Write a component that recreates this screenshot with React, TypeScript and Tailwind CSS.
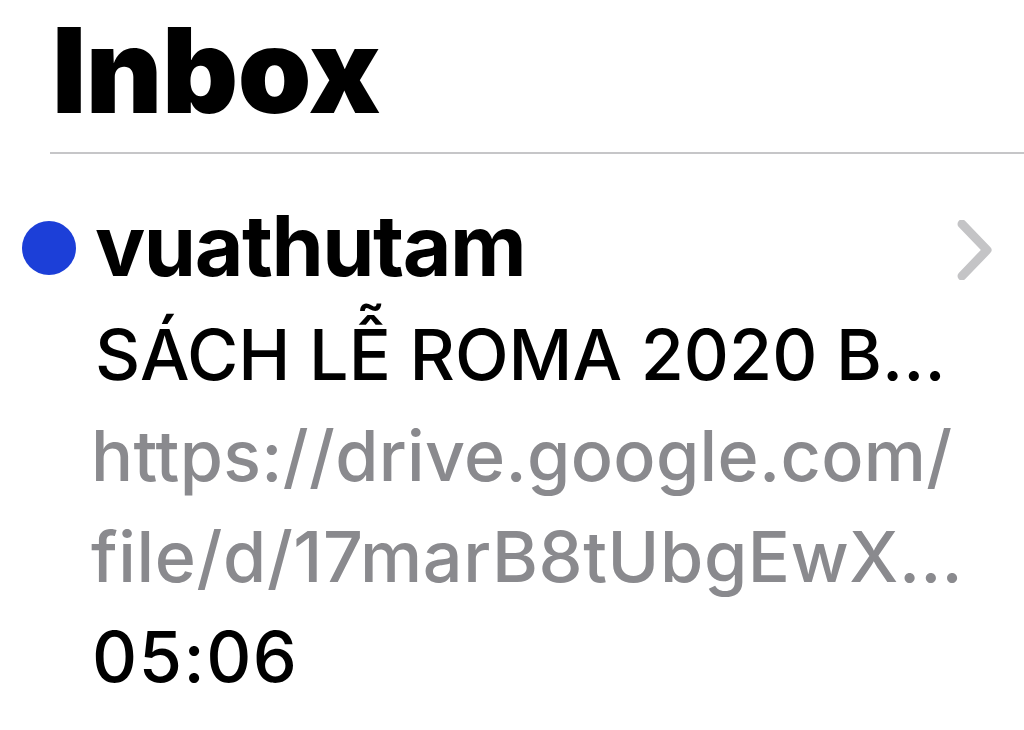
import React from "react";

export default function App() {
  const font = { fontFamily: "Inter, 'Noto Sans', 'Liberation Sans', sans-serif" };
  return (
    <div className="w-[1024px] h-[730px] bg-white overflow-hidden text-black" style={font}>
      <div className="pl-[52px] pt-[11px]">
        <h1 className="text-[118px] leading-none font-black tracking-[-0.5px]">Inbox</h1>
      </div>
      <div className="ml-[50px] mt-[23px] h-[2px] bg-[#c6c6c8]" />
      <div className="flex">
        <div className="w-[95px] shrink-0 flex justify-center pl-[3px] pt-[67px]">
          <div className="w-[54px] h-[54px] rounded-full bg-[#1c3fd8]" />
        </div>
        <div className="flex-1 min-w-0 flex flex-col pt-[42px]">
          <div className="text-[84px] leading-[100px] font-bold tracking-[-1.5px]">vuathutam</div>
          <div className="mt-[8px] text-[70px] leading-[101px] font-medium whitespace-nowrap">
            SÁCH LỄ ROMA 2020 B…
          </div>
          <div className="-ml-[4px] text-[70px] leading-[101px] text-[#8a8a8e] font-medium tracking-[0.3px] whitespace-nowrap">
            https://drive.google.com/
          </div>
          <div className="-ml-[4px] text-[70px] leading-[101px] text-[#8a8a8e] font-medium tracking-[0.6px] whitespace-nowrap">
            file/d/17marB8tUbgEwX…
          </div>
          <div className="-ml-[3px] text-[70px] leading-[99px] font-medium tracking-[1.5px]">05:06</div>
        </div>
        <div className="w-[80px] shrink-0 flex justify-start pt-[66px] pl-[13px]">
          <svg width="40" height="60" viewBox="0 0 40 60" fill="none">
            <polyline
              points="5,4 30,30 5,56"
              stroke="#c4c4c6"
              strokeWidth="9"
              strokeLinecap="round"
              strokeLinejoin="round"
            />
          </svg>
        </div>
      </div>
    </div>
  );
}
